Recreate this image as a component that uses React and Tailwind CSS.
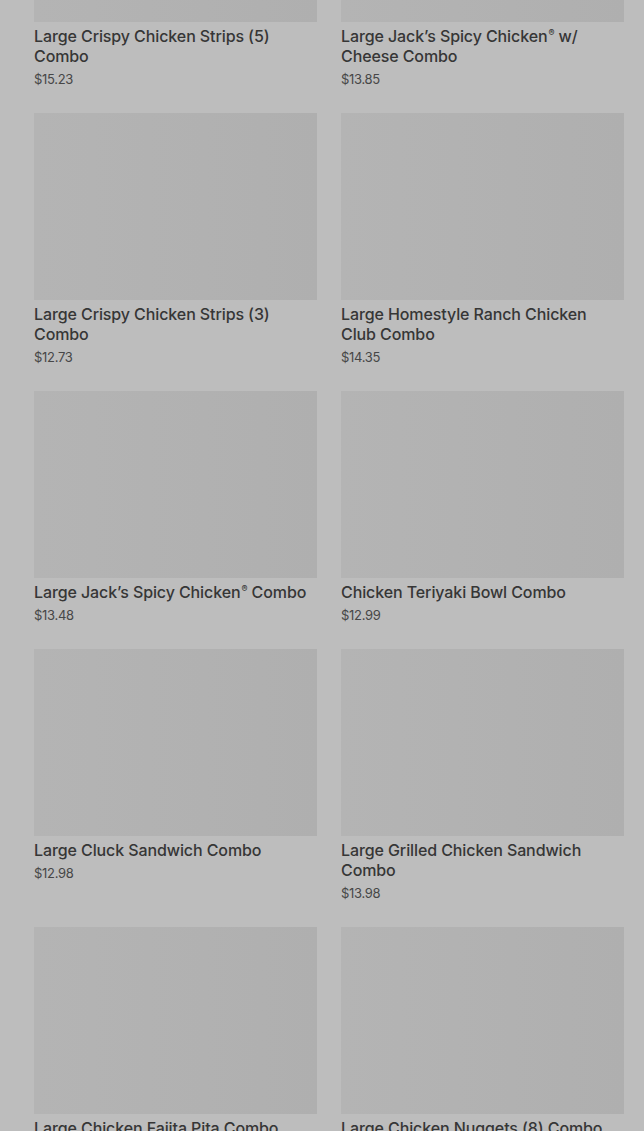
const items = [
  { name: 'Large Crispy Chicken Strips (5) Combo', price: '$15.23' },
  { name: ['Large Jack’s Spicy Chicken', ' w/ Cheese Combo'], price: '$13.85' },
  { name: 'Large Crispy Chicken Strips (3) Combo', price: '$12.73' },
  { name: 'Large Homestyle Ranch Chicken Club Combo', price: '$14.35' },
  { name: ['Large Jack’s Spicy Chicken', ' Combo'], price: '$13.48' },
  { name: 'Chicken Teriyaki Bowl Combo', price: '$12.99' },
  { name: 'Large Cluck Sandwich Combo', price: '$12.98' },
  { name: 'Large Grilled Chicken Sandwich Combo', price: '$13.98' },
  { name: 'Large Chicken Fajita Pita Combo', price: '$9.99' },
  { name: 'Large Chicken Nuggets (8) Combo', price: '$11.49' },
];

function Title({ name }) {
  // registered mark is drawn small and raised, like the original menu
  if (Array.isArray(name)) {
    return (
      <>
        {name[0]}
        <span className="align-[6px] text-[9px] leading-none ml-[1px]">®</span>
        {name[1]}
      </>
    );
  }
  return name;
}

function MenuCard({ item }) {
  return (
    <div className="flex flex-col">
      <div className="h-[187px] w-full bg-gradient-to-r from-[#b4b4b4] to-[#afafaf]" />
      <div className="mt-1 text-[16px] leading-[20px] font-medium tracking-[-0.1px] text-[#363636]">
        <Title name={item.name} />
      </div>
      <div className="mt-1 text-[13px] leading-[18px] tracking-[-0.3px] text-[#474747]">{item.price}</div>
    </div>
  );
}

export default function App() {
  return (
    <div
      className="h-[1131px] overflow-hidden bg-[#bdbdbd]"
      style={{ fontFamily: 'Inter, "Noto Sans", sans-serif' }}
    >
      <div className="-mt-[165px] pl-[34px] pr-[20px]">
        <div className="grid grid-cols-2 gap-x-6 gap-y-[25px]">
          {items.map((item, i) => (
            <MenuCard key={i} item={item} />
          ))}
        </div>
      </div>
    </div>
  );
}
